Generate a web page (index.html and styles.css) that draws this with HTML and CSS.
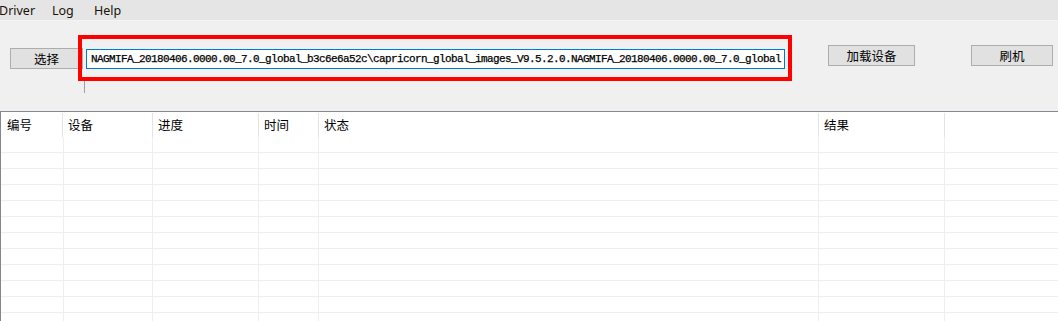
FILE: index.html
```html
<!DOCTYPE html>
<html>
<head>
<meta charset="utf-8">
<link rel="stylesheet" href="styles.css">
</head>
<body>
<div class="window">
  <div class="menubar">
    <span class="menu-item m-driver">Driver</span>
    <span class="menu-item m-log">Log</span>
    <span class="menu-item m-help">Help</span>
  </div>
  <div class="toolbar">
    <button class="btn btn-select">选择</button>
    <div class="path-wrap">
      <div class="path-input">NAGMIFA_20180406.0000.00_7.0_global_b3c6e6a52c\capricorn_global_images_V9.5.2.0.NAGMIFA_20180406.0000.00_7.0_global</div>
      <div class="highlight"></div>
      <div class="tick"></div>
    </div>
    <button class="btn btn-load">加载设备</button>
    <button class="btn btn-flash">刷机</button>
  </div>
  <div class="table">
    <div class="thead">
      <div class="th c1">编号</div>
      <div class="th c2">设备</div>
      <div class="th c3">进度</div>
      <div class="th c4">时间</div>
      <div class="th c5">状态</div>
      <div class="th c6">结果</div>
      <div class="th c7"></div>
    </div>
    <div class="tbody">
      <div class="tr"><div></div><div></div><div></div><div></div><div></div><div></div><div></div></div>
      <div class="tr"><div></div><div></div><div></div><div></div><div></div><div></div><div></div></div>
      <div class="tr"><div></div><div></div><div></div><div></div><div></div><div></div><div></div></div>
      <div class="tr"><div></div><div></div><div></div><div></div><div></div><div></div><div></div></div>
      <div class="tr"><div></div><div></div><div></div><div></div><div></div><div></div><div></div></div>
      <div class="tr"><div></div><div></div><div></div><div></div><div></div><div></div><div></div></div>
      <div class="tr"><div></div><div></div><div></div><div></div><div></div><div></div><div></div></div>
      <div class="tr"><div></div><div></div><div></div><div></div><div></div><div></div><div></div></div>
      <div class="tr"><div></div><div></div><div></div><div></div><div></div><div></div><div></div></div>
      <div class="tr"><div></div><div></div><div></div><div></div><div></div><div></div><div></div></div>
      <div class="tr"><div></div><div></div><div></div><div></div><div></div><div></div><div></div></div>
      <div class="tr"><div></div><div></div><div></div><div></div><div></div><div></div><div></div></div>
    </div>
  </div>
</div>
</body>
</html>
```

FILE: styles.css
```css
* { box-sizing: border-box; }
html, body {
  margin: 0;
  padding: 0;
  width: 1058px;
  height: 321px;
  overflow: hidden;
  background: #f0f0f0;
  font-family: "Noto Sans", "Noto Sans CJK SC", sans-serif;
  color: #000;
}
.window {
  display: flex;
  flex-direction: column;
  height: 321px;
}
.menubar {
  height: 21px;
  background: #e5e5e5;
  border-bottom: 1px solid #f4f4f4;
  display: flex;
  align-items: center;
  padding-top: 2px;
  font-size: 12.5px;
  line-height: 18px;
  color: #1a1208;
}
.menu-item { display: block; }
.m-driver { width: 53px; margin-left: -1px; }
.m-log { width: 42px; }

.toolbar {
  height: 90px;
  display: flex;
  align-items: flex-start;
  padding-left: 10px;
}
.btn {
  height: 21px;
  margin: 0;
  padding: 0;
  background: #e1e1e1;
  border: 1px solid #adadad;
  font-family: "Noto Sans CJK SC", sans-serif;
  font-size: 12.5px;
  line-height: 19px;
  color: #000;
  text-align: center;
}
.btn-select { width: 73px; margin-top: 27px; }
.btn-load { width: 87px; margin-top: 24px; margin-left: 43px; }
.btn-flash { width: 82px; margin-top: 24px; margin-left: 56px; }

.path-wrap {
  position: relative;
  margin-left: 3px;
  margin-top: 28px;
}
.path-input {
  width: 699px;
  height: 20px;
  background: #fff;
  border: 1px solid #0078d7;
  padding-left: 4px;
  font-family: "Liberation Mono", monospace;
  font-size: 11px;
  letter-spacing: -0.6px;
  line-height: 18px;
  white-space: nowrap;
  overflow: hidden;
  color: #000;
  -webkit-text-stroke: 0.25px #000;
}
.highlight {
  position: absolute;
  left: -8px;
  top: -14px;
  width: 714px;
  height: 46px;
  border: 4px solid #ff0000;
}
.tick {
  position: absolute;
  left: -2px;
  top: 32px;
  width: 1px;
  height: 12px;
  background: #a0a0a0;
}

.table {
  flex: 1;
  background: #fff;
  border-top: 1px solid #828790;
  border-left: 1px solid #828790;
  overflow: hidden;
}
.thead {
  display: grid;
  grid-template-columns: 62px 90px 106px 60px 500px 126px 1fr;
  height: 25px;
  padding-top: 1px;
}
.th {
  font-family: "Noto Sans CJK SC", sans-serif;
  font-size: 12.5px;
  line-height: 24px;
  padding-left: 5px;
  border-right: 1px solid #e3e3e3;
  white-space: nowrap;
}
.th.c1 { padding-left: 6px; }
.th.c7 { border-right: none; }
.tr {
  display: grid;
  grid-template-columns: 62px 90px 106px 60px 500px 126px 1fr;
  height: 16px;
  border-bottom: 1px solid #efefef;
}
.tr > div {
  border-right: 1px solid #efefef;
}
.tr > div:first-child { border-right: none; box-shadow: 1px 0 0 #efefef; }
.tr > div:last-child { border-right: none; }
```
